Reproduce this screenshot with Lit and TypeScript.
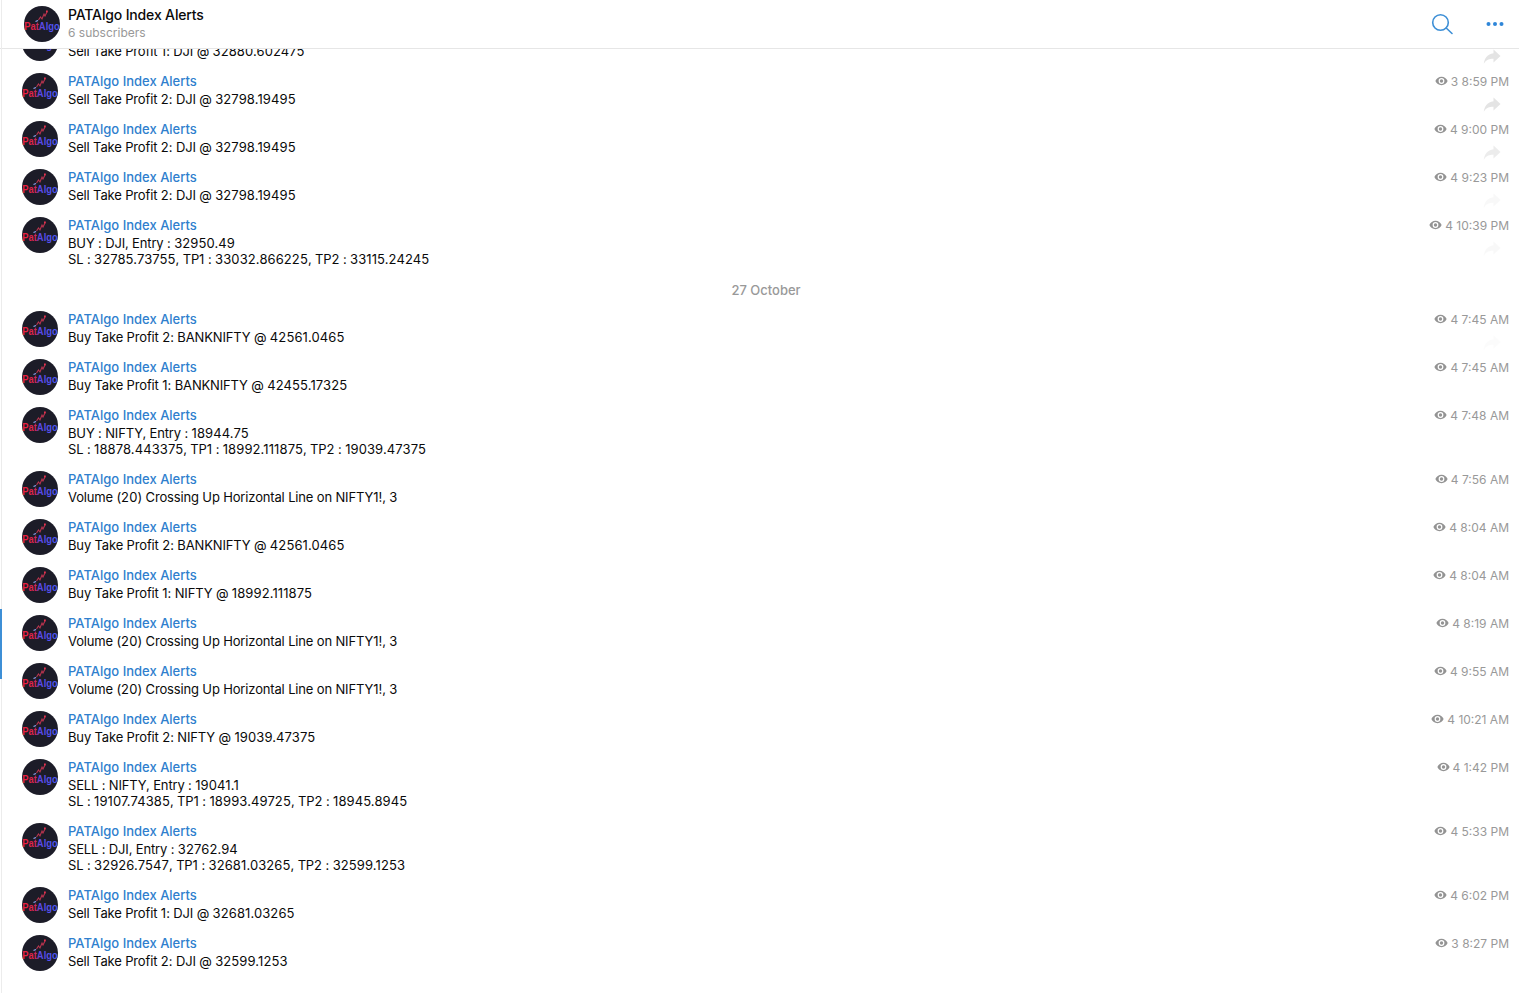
import { LitElement, html, css, svg } from "lit";
import { customElement } from "lit/decorators.js";

type Msg = { text: string[]; views: number; time: string; fwd?: number };
type Item = Msg | { date: string };

const items: Item[] = [
  { text: ["Sell Take Profit 1: DJI @ 32880.602475"], views: 3, time: "8:58 PM", fwd: 0.8 },
  { text: ["Sell Take Profit 2: DJI @ 32798.19495"], views: 3, time: "8:59 PM", fwd: 0.8 },
  { text: ["Sell Take Profit 2: DJI @ 32798.19495"], views: 4, time: "9:00 PM", fwd: 0.55 },
  { text: ["Sell Take Profit 2: DJI @ 32798.19495"], views: 4, time: "9:23 PM", fwd: 0.2 },
  { text: ["BUY : DJI, Entry : 32950.49", "SL : 32785.73755, TP1 : 33032.866225, TP2 : 33115.24245"], views: 4, time: "10:39 PM", fwd: 0.18 },
  { date: "27 October" },
  { text: ["Buy Take Profit 2: BANKNIFTY @ 42561.0465"], views: 4, time: "7:45 AM", fwd: 0.1 },
  { text: ["Buy Take Profit 1: BANKNIFTY @ 42455.17325"], views: 4, time: "7:45 AM" },
  { text: ["BUY : NIFTY, Entry : 18944.75", "SL : 18878.443375, TP1 : 18992.111875, TP2 : 19039.47375"], views: 4, time: "7:48 AM" },
  { text: ["Volume (20) Crossing Up Horizontal Line on NIFTY1!, 3"], views: 4, time: "7:56 AM" },
  { text: ["Buy Take Profit 2: BANKNIFTY @ 42561.0465"], views: 4, time: "8:04 AM" },
  { text: ["Buy Take Profit 1: NIFTY @ 18992.111875"], views: 4, time: "8:04 AM" },
  { text: ["Volume (20) Crossing Up Horizontal Line on NIFTY1!, 3"], views: 4, time: "8:19 AM" },
  { text: ["Volume (20) Crossing Up Horizontal Line on NIFTY1!, 3"], views: 4, time: "9:55 AM" },
  { text: ["Buy Take Profit 2: NIFTY @ 19039.47375"], views: 4, time: "10:21 AM" },
  { text: ["SELL : NIFTY, Entry : 19041.1", "SL : 19107.74385, TP1 : 18993.49725, TP2 : 18945.8945"], views: 4, time: "1:42 PM" },
  { text: ["SELL : DJI, Entry : 32762.94", "SL : 32926.7547, TP1 : 32681.03265, TP2 : 32599.1253"], views: 4, time: "5:33 PM" },
  { text: ["Sell Take Profit 1: DJI @ 32681.03265"], views: 4, time: "6:02 PM" },
  { text: ["Sell Take Profit 2: DJI @ 32599.1253"], views: 3, time: "8:27 PM" },
];

let gid = 0;
const avatar = () => {
  const id = `g${gid++}`;
  return html`<svg class="avatar" viewBox="0 0 36 36" aria-hidden="true">
    ${svg`<defs><linearGradient id=${id} x1="0" x2="1" y1="0" y2="0">
      <stop offset="0" stop-color="#f0203c"/><stop offset="0.36" stop-color="#d82450"/>
      <stop offset="0.48" stop-color="#5a48e8"/><stop offset="1" stop-color="#4a58f8"/></linearGradient></defs>
    <circle cx="18" cy="18" r="18" fill="#1c1c28"/>
    <path d="M14.500 14 L16.500 11 L18 13 L20 8 L21 10 L23 6" fill="none" stroke="#b8344e" stroke-width="1.100"/>
    <path d="M11.500 15.500 L14 14.500" stroke="#8fa4f0" stroke-width="1.300"/>
    <rect x="22" y="4.500" width="1.800" height="1.800" fill="#e8324e"/>
    <text x="18" y="23.700" text-anchor="middle" font-family="Liberation Sans, sans-serif" font-weight="700" font-size="10.400" textLength="35.500" lengthAdjust="spacingAndGlyphs" fill="url(#${id})">PatAlgo</text>`}
  </svg>`;
};

const eye = html`<svg class="eye" viewBox="0 0 14 10" aria-hidden="true">
  <path fill-rule="evenodd" d="M7 .5C4 .5 1.600 2.400.4 5c1.200 2.600 3.600 4.500 6.600 4.500s5.400-1.900 6.600-4.500C12.400 2.400 10 .5 7 .5Zm0 1.400a3.100 3.100 0 1 1 0 6.200 3.100 3.100 0 0 1 0-6.200Z"/>
  <circle cx="7" cy="5" r="1.800"/>
</svg>`;

const arrow = (o: number) => html`<svg class="fwd" style="opacity:${o}" viewBox="0 0 18 16" aria-hidden="true">
  <path d="M10.500.5 17.500 7l-7 6.500V9.800C6 9.800 3 11 .8 14.800 1.400 9.500 4.500 5 10.500 4.300Z"/>
</svg>`;

/* The reference's digits are wider and its letters narrower than Inter's: runs of digits get their own spacing. */
const runs = (t: string) =>
  t.split(/(\d[\d.]*)/).map((p, i) => (i % 2 ? html`<span class="num">${p}</span>` : p));

@customElement("app-root")
export class AppRoot extends LitElement {
  static styles = css`
    :host { display: block; height: 993px; overflow: hidden; background: #fff; position: relative;
      font-family: Inter, "Liberation Sans", sans-serif; font-size: 13px; color: #0a0a0a; }
    .edge { position: absolute; left: 1px; top: 0; bottom: 0; width: 1px; background: #ececec; z-index: 3; }
    .mark { position: absolute; left: 0; top: 609px; height: 70px; width: 2px; background: #3d8fd6; z-index: 4; }
    header { height: 48px; border-bottom: 1px solid #e6e6e6; background: #fff; display: flex; align-items: center;
      padding: 0 16px 0 24px; position: relative; z-index: 2; }
    .title { margin-left: 8px; flex: 1; display: flex; flex-direction: column; gap: 1px; margin-top: -2px; }
    .title b { font-weight: 500; font-size: 14px; line-height: 18px; letter-spacing: -0.15px; }
    .title span { font-size: 12px; line-height: 16px; color: #999; }
    .search { width: 24px; height: 24px; color: #3d8fd6; margin-right: 30px; }
    .more { width: 20px; height: 6px; fill: #2f86d8; margin-right: -2px; }
    .avatar { width: 36px; height: 36px; flex: none; display: block; }
    main { height: 944px; overflow: hidden; }
    .list { margin-top: -24px; }
    .row { display: flex; padding: 0 10px 12px 22px; position: relative; }
    .body { margin-left: 10px; flex: 1; padding-bottom: 2px; }
    .name { color: #2f7fce; font-weight: 500; line-height: 16px; margin-bottom: 2px; }
    .line { line-height: 16px; white-space: nowrap; letter-spacing: -0.15px; }
    .num { letter-spacing: 0.1px; }
    .meta { display: flex; align-items: center; height: 16px; color: #999; font-size: 12px; gap: 3px; }
    .eye { width: 13px; height: 10px; fill: #939393; }
    .fwd { position: absolute; right: 18px; top: 24px; width: 18px; height: 16px; fill: #dedede; }
    .date { height: 30px; text-align: center; color: #999; font-weight: 500; line-height: 18px; padding-left: 13px; }
  `;

  render() {
    return html`
      <div class="edge"></div><div class="mark"></div>
      <header>
        ${avatar()}
        <div class="title"><b>PATAlgo Index Alerts</b><span>6 subscribers</span></div>
        <svg class="search" viewBox="0 0 24 24" fill="none" stroke="currentColor" stroke-width="1.600" stroke-linecap="round" aria-hidden="true">
          <circle cx="9.500" cy="10.500" r="7.800"/><path d="M15.200 16 21 21.500"/>
        </svg>
        <svg class="more" viewBox="0 0 20 6" aria-hidden="true"><circle cx="3.500" cy="3" r="2"/><circle cx="10" cy="3" r="2"/><circle cx="16.500" cy="3" r="2"/></svg>
      </header>
      <main><div class="list">
        ${items.map((it) => "date" in it
          ? html`<div class="date">${it.date}</div>`
          : html`<div class="row">
              ${avatar()}
              <div class="body">
                <div class="name">PATAlgo Index Alerts</div>
                ${it.text.map((t) => html`<div class="line">${runs(t)}</div>`)}
              </div>
              <div class="meta">${eye}<span>${it.views} ${it.time}</span></div>
              ${it.fwd ? arrow(it.fwd) : ""}
            </div>`)}
      </div></main>`;
  }
}
